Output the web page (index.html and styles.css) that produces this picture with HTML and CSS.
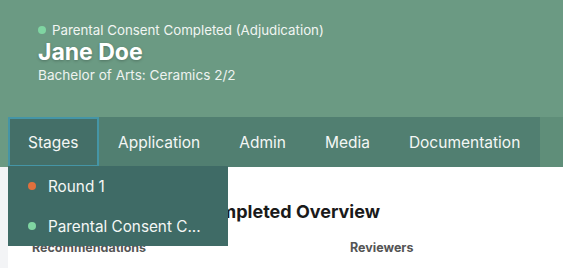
FILE: index.html
```html
<!DOCTYPE html>
<html lang="en">
<head>
	<meta charset="UTF-8">
	<meta name="viewport" content="width=device-width, initial-scale=1.0">
	<title>Jane Doe</title>
	<link rel="stylesheet" href="styles.css">
</head>
<body>
	<header class="header">
		<div class="header__info">
			<div class="header__status"><span class="dot dot--green"></span>Parental Consent Completed (Adjudication)</div>
			<h1 class="header__name">Jane Doe</h1>
			<div class="header__program">Bachelor of Arts: Ceramics 2/2</div>
		</div>
		<nav class="nav">
			<div class="nav__tabs">
				<div class="nav__tab nav__tab--active">
					Stages
					<div class="dropdown">
						<div class="dropdown__item"><span class="dot dot--orange"></span>Round 1</div>
						<div class="dropdown__item"><span class="dot dot--green"></span>Parental Consent C...</div>
					</div>
				</div>
				<div class="nav__tab">Application</div>
				<div class="nav__tab">Admin</div>
				<div class="nav__tab">Media</div>
				<div class="nav__tab">Documentation</div>
			</div>
		</nav>
	</header>
	<main class="main">
		<section class="card">
			<h2 class="card__title">Parental Consent Completed Overview</h2>
			<div class="card__cols">
				<div class="card__label">Recommendations</div>
				<div class="card__label">Reviewers</div>
			</div>
		</section>
	</main>
</body>
</html>
```

FILE: styles.css
```css
* { box-sizing: border-box }
body {
	margin: 0;
	font-family: Inter, 'Noto Sans', sans-serif;
	color: #1f1f1f;
	background: #f3f4f6;
}
.header {
	background: #6b9a83;
	color: #fff;
}
.header__info {
	padding: 22px 38px 0;
	height: 117px;
}
.header__status {
	display: flex;
	align-items: center;
	font-size: 13.3px;
	line-height: 16px;
	color: #f1f5f2;
}
.header__status .dot {
	margin-right: 6px;
}
.header__name {
	margin: 1px 0 0;
	font-size: 23px;
	line-height: 27px;
	font-weight: 700;
	text-shadow: 0 1px 3px rgba(0, 0, 0, .25);
}
.header__program {
	margin-top: 1px;
	font-size: 13.6px;
	line-height: 17px;
	color: #eef3f0;
}
.dot {
	display: inline-block;
	width: 8px;
	height: 8px;
	border-radius: 50%;
	flex-shrink: 0;
}
.dot--green { background: #7fd5a2; }
.dot--orange { background: #e0703d; }
.nav {
	margin-left: 8px;
	background: #5f8e79;
}
.nav__tabs {
	display: flex;
	width: 532px;
	height: 50px;
	background: #517f71;
}
.nav__tab {
	position: relative;
	display: flex;
	align-items: center;
	padding: 0 19.5px;
	font-size: 15.5px;
	color: #f4f7f5;
	border: 2px solid transparent;
	border-left: 0;
	border-right: 0;
}
.nav__tab--active {
	padding: 0 18px;
	background: #446f68;
	border: 2px solid #4595a6;
}
.dropdown {
	position: absolute;
	top: 47px;
	left: -2px;
	width: 220px;
	background: #3f6b66;
	z-index: 2;
}
.dropdown__item {
	display: flex;
	align-items: center;
	height: 40px;
	padding: 0 0 0 20px;
	font-size: 15.3px;
	color: #f4f7f5;
}
.dropdown__item .dot {
	margin-right: 12px;
}
.main {
	padding-left: 8px;
}
.card {
	background: #fff;
	height: 101px;
	padding: 34px 24px 0;
}
.card__title {
	margin: 0 0 0 8px;
	font-size: 18px;
	line-height: 22px;
	font-weight: 700;
	color: #1a1a1a;
}
.card__cols {
	display: grid;
	grid-template-columns: 318px 1fr;
	margin-top: 17px;
}
.card__label {
	font-size: 12.5px;
	font-weight: 700;
	color: #555;
}
```
